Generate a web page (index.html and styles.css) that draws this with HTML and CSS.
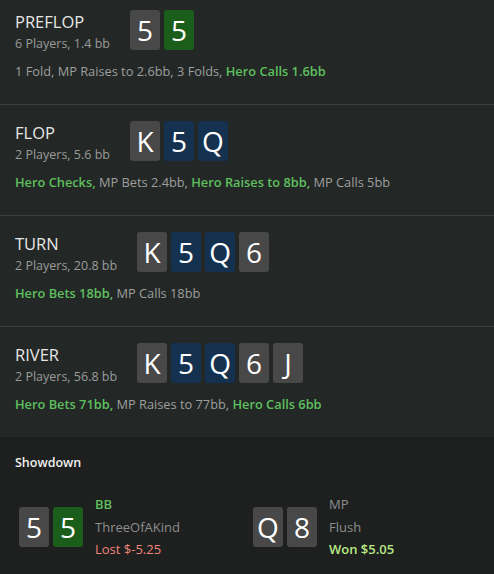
FILE: index.html
```html
<!DOCTYPE html>
<html>
<head>
<meta charset="utf-8">
<link rel="stylesheet" href="styles.css">
</head>
<body>
<div class="hand">
  <section class="street first">
    <div class="street-head">
      <div class="street-info">
        <div class="street-name">PREFLOP</div>
        <div class="street-sub">6 Players, 1.4 bb</div>
      </div>
      <div class="cards">
        <span class="card gray">5</span><span class="card green">5</span>
      </div>
    </div>
    <div class="actions">1 Fold, MP Raises to 2.6bb, 3 Folds, <b class="hero">Hero Calls 1.6bb</b></div>
  </section>
  <section class="street">
    <div class="street-head">
      <div class="street-info">
        <div class="street-name">FLOP</div>
        <div class="street-sub">2 Players, 5.6 bb</div>
      </div>
      <div class="cards">
        <span class="card gray">K</span><span class="card blue">5</span><span class="card blue">Q</span>
      </div>
    </div>
    <div class="actions"><b class="hero">Hero Checks,</b> MP Bets 2.4bb, <b class="hero">Hero Raises to 8bb,</b> MP Calls 5bb</div>
  </section>
  <section class="street">
    <div class="street-head">
      <div class="street-info">
        <div class="street-name">TURN</div>
        <div class="street-sub">2 Players, 20.8 bb</div>
      </div>
      <div class="cards">
        <span class="card gray">K</span><span class="card blue">5</span><span class="card blue">Q</span><span class="card gray">6</span>
      </div>
    </div>
    <div class="actions"><b class="hero">Hero Bets 18bb,</b> MP Calls 18bb</div>
  </section>
  <section class="street last">
    <div class="street-head">
      <div class="street-info">
        <div class="street-name">RIVER</div>
        <div class="street-sub">2 Players, 56.8 bb</div>
      </div>
      <div class="cards">
        <span class="card gray">K</span><span class="card blue">5</span><span class="card blue">Q</span><span class="card gray">6</span><span class="card gray">J</span>
      </div>
    </div>
    <div class="actions"><b class="hero">Hero Bets 71bb,</b> MP Raises to 77bb, <b class="hero">Hero Calls 6bb</b></div>
  </section>
  <section class="showdown">
    <div class="showdown-title">Showdown</div>
    <div class="players">
      <div class="player">
        <div class="cards">
          <span class="card gray">5</span><span class="card green">5</span>
        </div>
        <div class="player-info">
          <div class="pos hero">BB</div>
          <div class="combo">ThreeOfAKind</div>
          <div class="result lost">Lost $-5.25</div>
        </div>
      </div>
      <div class="player">
        <div class="cards">
          <span class="card gray">Q</span><span class="card gray">8</span>
        </div>
        <div class="player-info">
          <div class="pos">MP</div>
          <div class="combo">Flush</div>
          <div class="result won">Won $5.05</div>
        </div>
      </div>
    </div>
  </section>
</div>
</body>
</html>
```
FILE: styles.css
```css
html, body {
  margin: 0;
  padding: 0;
  background: #232826;
}
body {
  font-family: "Open Sans", "Noto Sans", sans-serif;
  color: #a0a0a0;
  width: 494px;
  height: 574px;
  overflow: hidden;
}
.street {
  padding: 16px 15px 24px;
  border-bottom: 1px solid #3b3e3d;
}
.street.first {
  padding-top: 10px;
}
.street.last {
  border-bottom: none;
}
.street-head {
  display: flex;
  align-items: flex-start;
  gap: 20px;
}
.street-info {
  display: flex;
  flex-direction: column;
}
.street-name {
  font-size: 16.5px;
  line-height: 24px;
  color: #e6e6e6;
}
.street-sub {
  font-size: 12.5px;
  line-height: 20px;
  color: #9a9a9a;
}
.cards {
  display: flex;
  gap: 4px;
}
.card {
  width: 30px;
  height: 40px;
  border-radius: 3px;
  display: flex;
  align-items: center;
  justify-content: center;
  font-size: 28px;
  color: #ffffff;
  line-height: 40px;
}
.card.gray { background: #484848; }
.card.green { background: #1b5e1b; }
.card.blue { background: #14324f; }
.actions {
  margin-top: 8px;
  font-size: 12.8px;
  line-height: 18px;
  color: #9e9e9e;
  white-space: nowrap;
}
.hero {
  color: #5fbf5f;
  font-weight: 600;
}
.showdown {
  background: #1d201e;
  padding: 17px 15px 14px;
  height: 137px;
  box-sizing: border-box;
}
.showdown-title {
  font-size: 12.5px;
  line-height: 18px;
  font-weight: 600;
  color: #f0f0f0;
}
.players {
  margin-top: 21px;
  display: grid;
  grid-template-columns: 234px 1fr;
  padding-left: 4px;
}
.player {
  display: flex;
  align-items: center;
  gap: 12px;
}
.player-info {
  display: flex;
  flex-direction: column;
  font-size: 13px;
  line-height: 22.5px;
}
.pos { color: #8e8e8e; }
.pos.hero { color: #5fbf5f; font-weight: 600; }
.combo { color: #8e8e8e; }
.result.lost { color: #f0847a; }
.result.won { color: #b8e986; font-weight: 600; }
```
